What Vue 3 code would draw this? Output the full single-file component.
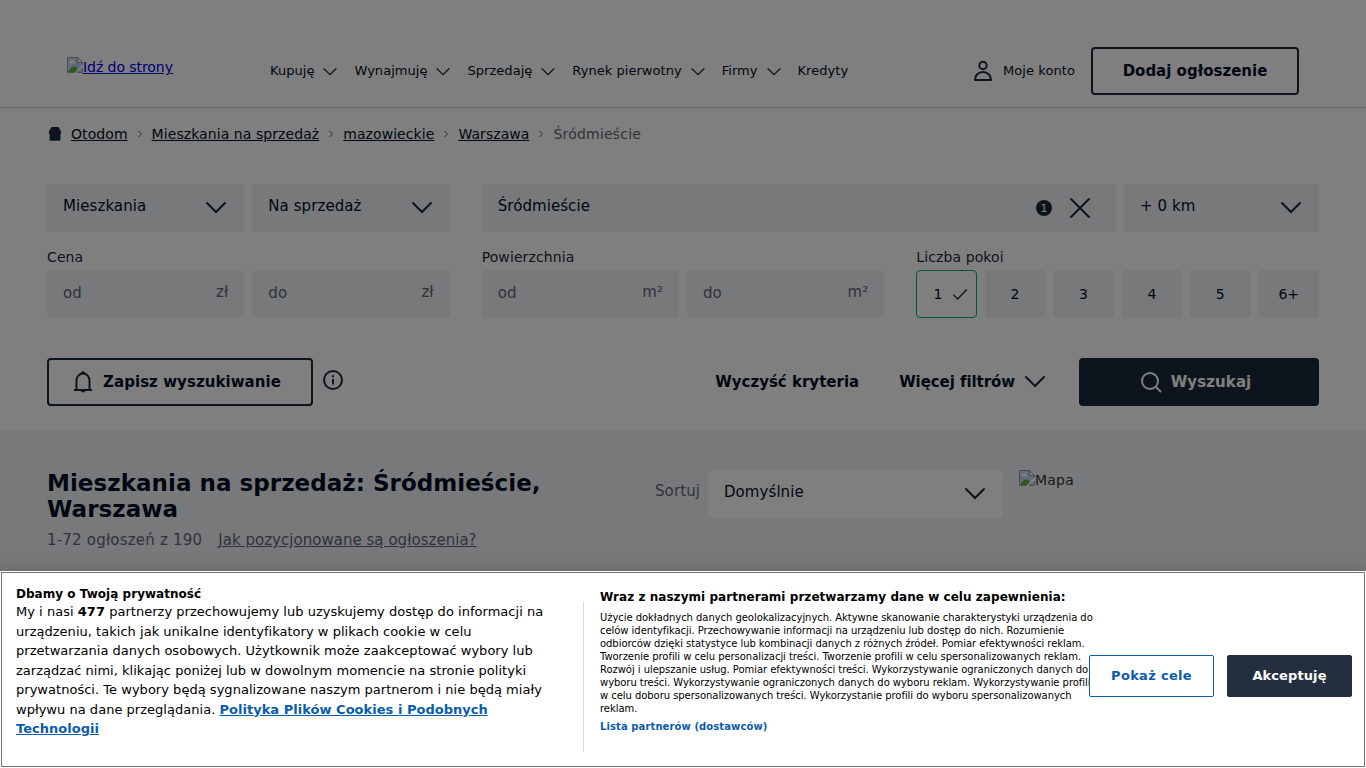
<script setup>
import { h } from 'vue'

const nav = ['Kupuję', 'Wynajmuję', 'Sprzedaję', 'Rynek pierwotny', 'Firmy']
const crumbs = ['Otodom', 'Mieszkania na sprzedaż', 'mazowieckie', 'Warszawa']
const rooms = ['2', '3', '4', '5', '6+']

const Chevron = (props) =>
  h('svg', { width: props.size, height: props.size, viewBox: '0 0 24 24', fill: 'none', stroke: '#1d293b', 'stroke-width': 2, 'stroke-linecap': 'round', 'stroke-linejoin': 'miter' }, [
    h('path', { d: 'M3 7l9 9 9-9' }),
  ])
Chevron.props = ['size']

const MissingImage = () =>
  h('svg', { width: 16, height: 16, viewBox: '0 0 16 16' }, [
    h('path', { d: 'M.5.5h10l5 5v10H.5z', fill: '#c3d6f6' }),
    h('path', { d: 'M2.500 5.500a1.500 1.500 0 0 1 1.600-1.700 2 2 0 0 1 3.500.6 1.200 1.200 0 0 1 .2 2H3.200z', fill: '#fff' }),
    h('path', { d: 'M1 15c2-4 4.500-6 7-5.500 2 .4 3 2.500 4 5.500z', fill: '#5bb23a' }),
    h('path', { d: 'M16 7v3l-7 6H7z', fill: '#fff' }),
    h('path', { d: 'M10.500.500v5h5zM.5.5h10l5 5v2M.5.5v15h7M15.500 11v4.500H10', fill: 'none', stroke: '#9a9a9a' }),
    h('path', { d: 'M11 1.500V5h3.500z', fill: '#fff' }),
  ])
</script>

<template>
  <div class="page">
    <header class="header">
      <a class="logo" href="#"><MissingImage class="missing" /><span>Idź do strony</span></a>
      <nav class="nav">
        <span v-for="item in nav" :key="item" class="nav-item">{{ item }}<Chevron :size="16" /></span>
        <span class="nav-item">Kredyty</span>
      </nav>
      <div class="account">
        <svg width="24" height="24" viewBox="0 0 24 24" fill="none" stroke="#1d293b" stroke-width="2" stroke-linejoin="round">
          <circle cx="12" cy="6.500" r="3.700" />
          <path d="M4 21c0-4.500 3.200-8 8-8s8 3.500 8 8z" />
        </svg>
        <span>Moje konto</span>
      </div>
      <button class="btn outline add">Dodaj ogłoszenie</button>
    </header>

    <main class="search">
      <div class="crumbs">
        <svg class="home" width="16" height="16" viewBox="0 0 16 16"><path fill="#1d293b" d="M4.500 1h7l2.600 4.500v2.300H13.400v6.200q0 .8-.8.8H3.400q-.8 0-.8-.8V7.800H1.900V5.500z" /></svg>
        <template v-for="c in crumbs" :key="c">
          <a href="#">{{ c }}</a>
          <svg class="sep" width="8" height="8" viewBox="0 0 8 8" fill="none" stroke="#5f6673"><path d="M2.500 1l3 3-3 3" /></svg>
        </template>
        <span class="current">Śródmieście</span>
      </div>

      <div class="grid">
        <div class="pair">
          <div class="field"><span>Mieszkania</span><Chevron :size="24" /></div>
          <div class="field"><span>Na sprzedaż</span><Chevron :size="24" /></div>
        </div>
        <div class="location">
          <div class="field place">
            <span>Śródmieście</span>
            <b class="count">1</b>
            <svg width="24" height="24" viewBox="0 0 24 24" fill="none" stroke="#1d293b" stroke-width="2" stroke-linecap="round"><path d="M3 3l18 18M21 3L3 21" /></svg>
          </div>
          <div class="field radius"><span>+ 0 km</span><Chevron :size="24" /></div>
        </div>
        <section>
          <label>Cena</label>
          <div class="pair">
            <div class="field input"><span>od</span><i>zł</i></div>
            <div class="field input"><span>do</span><i>zł</i></div>
          </div>
        </section>
        <section>
          <label>Powierzchnia</label>
          <div class="pair">
            <div class="field input"><span>od</span><i>m²</i></div>
            <div class="field input"><span>do</span><i>m²</i></div>
          </div>
        </section>
        <section>
          <label>Liczba pokoi</label>
          <div class="rooms">
            <div class="room selected">
              <span>1</span>
              <svg width="16" height="16" viewBox="0 0 16 16" fill="none" stroke="#1d293b" stroke-width="1.300" stroke-linecap="round"><path d="M1.700 9l4 4 8.800-9.300" /></svg>
            </div>
            <div v-for="r in rooms" :key="r" class="room">{{ r }}</div>
          </div>
        </section>
      </div>

      <div class="actions">
        <button class="btn outline save">
          <svg width="24" height="24" viewBox="0 0 24 24" fill="none" stroke="#1d293b" stroke-width="2">
            <path d="M3 20h18M5.500 20v-9.500c0-3.800 2.700-7 6.500-7s6.500 3.200 6.500 7V20" />
            <path d="M10.300 3.200a1.700 1.400 0 0 1 3.400 0zM10.300 21.200a1.700 .7 0 0 0 3.400 0z" fill="#1d293b" stroke-width="1" />
          </svg>
          Zapisz wyszukiwanie
        </button>
        <svg class="info" width="24" height="24" viewBox="0 0 24 24" fill="none" stroke="#1d293b" stroke-width="2"><circle cx="12" cy="12" r="9" /><path d="M12 11v5.500M12 7.300v2" /></svg>
        <span class="clear">Wyczyść kryteria</span>
        <span class="more">Więcej filtrów<Chevron :size="24" /></span>
        <button class="btn submit">
          <svg width="24" height="24" viewBox="0 0 24 24" fill="none" stroke="#fff" stroke-width="2" stroke-linecap="round"><circle cx="11" cy="11" r="8" /><path d="M17 17l4.500 4.500" /></svg>
          Wyszukaj
        </button>
      </div>
    </main>

    <div class="results">
      <div class="heading">
        <h1>Mieszkania na sprzedaż: Śródmieście, Warszawa</h1>
        <p><span>1-72 ogłoszeń z 190</span><a href="#">Jak pozycjonowane są ogłoszenia?</a></p>
      </div>
      <span class="sort">Sortuj</span>
      <div class="field order"><span>Domyślnie</span><Chevron :size="24" /></div>
      <div class="map"><MissingImage class="missing" /><span>Mapa</span></div>
    </div>

    <div class="overlay"></div>

    <aside class="consent">
      <div class="policy">
        <h2>Dbamy o Twoją prywatność</h2>
        <p>My i nasi <b>477</b> partnerzy przechowujemy lub uzyskujemy dostęp do informacji na urządzeniu, takich jak unikalne identyfikatory w plikach cookie w celu przetwarzania danych osobowych. Użytkownik może zaakceptować wybory lub zarządzać nimi, klikając poniżej lub w dowolnym momencie na stronie polityki prywatności. Te wybory będą sygnalizowane naszym partnerom i nie będą miały wpływu na dane przeglądania. <a href="#">Polityka Plików Cookies i Podobnych Technologii</a></p>
      </div>
      <div class="partners">
        <h3>Wraz z naszymi partnerami przetwarzamy dane w celu zapewnienia:</h3>
        <p>Użycie dokładnych danych geolokalizacyjnych. Aktywne skanowanie charakterystyki urządzenia do celów identyfikacji. Przechowywanie informacji na urządzeniu lub dostęp do nich. Rozumienie odbiorców dzięki statystyce lub kombinacji danych z różnych źródeł. Pomiar efektywności reklam. Tworzenie profili w celu personalizacji treści. Tworzenie profili w celu spersonalizowanych reklam. Rozwój i ulepszanie usług. Pomiar efektywności treści. Wykorzystywanie ograniczonych danych do wyboru treści. Wykorzystywanie ograniczonych danych do wyboru reklam. Wykorzystywanie profili w celu doboru spersonalizowanych treści. Wykorzystanie profili do wyboru spersonalizowanych reklam.</p>
        <a href="#">Lista partnerów (dostawców)</a>
      </div>
      <div class="choices">
        <button class="goals">Pokaż cele</button>
        <button class="accept">Akceptuję</button>
      </div>
    </aside>
  </div>
</template>

<style>
body { overflow: hidden; background: #fff; }
</style>

<style scoped>
* { box-sizing: border-box; }
.page { position: relative; height: 768px; overflow: hidden; background: #fff; color: #000f24; font-family: "DejaVu Sans", sans-serif; font-size: 14px; }
svg { display: block; flex: none; }
h1, h2, h3, p { margin: 0; }
button { font-family: inherit; padding: 0; }
.header { display: flex; height: 108px; padding: 0 67px; border-bottom: 1px solid #d2d4d8; }
.logo { display: flex; width: 203px; padding-top: 57px; font-size: 14px; line-height: 20px; letter-spacing: -.06px; color: #0000ee; }
.logo span { height: 20px; text-decoration: underline; }
.nav { display: flex; gap: 16px; padding-top: 60px; letter-spacing: .04px; }
.nav-item { display: flex; gap: 8px; align-items: center; height: 20px; font-size: 13px; white-space: nowrap; }
.nav-item svg { margin-top: 3px; }
.account { display: flex; gap: 8px; align-items: center; height: 24px; margin: 59px 16px 0 auto; font-size: 13px; letter-spacing: .08px; }
.account span { margin-top: -2px; }
.btn { display: flex; align-items: center; justify-content: center; gap: 8px; height: 48px; border-radius: 4px; font-size: 15px; font-weight: 700; color: #000f24; background: transparent; border: 2px solid #1d293b; }
.add { width: 208px; margin-top: 47px; }
.search { height: 322px; padding: 16px 47px 0; }
.crumbs { display: flex; align-items: center; gap: 8px; height: 20px; font-size: 14px; letter-spacing: .07px; }
.crumbs a { color: #000f24; text-decoration: underline; }
.crumbs .current { color: #5f6673; letter-spacing: .2px; }
.grid { display: grid; grid-template-columns: repeat(3, 1fr); column-gap: 32px; margin-top: 40px; }
.pair { display: grid; grid-template-columns: 1fr 1fr; gap: 8px; }
.location { grid-column: span 2; display: flex; gap: 8px; }
.field { display: flex; align-items: center; justify-content: space-between; height: 48px; padding: 0 16px; border-radius: 4px; background: #f1f3f6; font-size: 15px; letter-spacing: .07px; }
.field > span { margin-top: -4px; }
.place { flex: 1; padding-right: 24px; }
.place > span { flex: 1; }
.count { display: grid; place-items: center; width: 16px; height: 16px; margin-right: 16px; border-radius: 50%; background: #1d293b; color: #fff; font-size: 11px; font-weight: 400; letter-spacing: 0; }
.radius { width: 195px; }
section { padding-top: 15px; }
label { display: block; height: 23px; line-height: 20px; font-size: 14px; letter-spacing: .1px; color: #1d293b; }
.input { color: #5f6673; }
.input > span { margin-top: -2px; }
.input i { font-style: normal; margin-top: -4px; }
.rooms { display: grid; grid-template-columns: repeat(6, 1fr); gap: 8px; }
.room { display: flex; align-items: center; justify-content: center; height: 48px; border-radius: 4px; background: #f1f3f6; font-size: 14px; }
.selected { gap: 9px; padding-left: 8px; background: #fff; border: 1px solid #00b36b; }
.actions { display: flex; align-items: center; margin-top: 40px; font-size: 15px; font-weight: 700; }
.save { width: 266px; padding-right: 8px; letter-spacing: .06px; }
.info { margin: -4px 0 0 8px; }
.clear { margin-left: auto; }
.more { display: flex; align-items: center; gap: 8px; margin: 0 32px 0 40px; letter-spacing: -.07px; }
.submit { width: 240px; padding-right: 8px; background: #1d293b; color: #fff; letter-spacing: .1px; }
.results { display: flex; height: 338px; padding: 40px 47px 0; background: #f1f3f6; }
.heading { width: 600px; }
h1 { width: 520px; font-size: 23px; line-height: 26px; letter-spacing: .04px; }
.heading p { display: flex; gap: 16px; margin-top: 8px; line-height: 20px; font-size: 15px; color: #5f6673; }
.heading p span { letter-spacing: .2px; }
.heading a { color: #5f6673; text-decoration: underline; letter-spacing: .03px; }
.sort { width: 61px; padding-left: 8px; line-height: 42px; font-size: 15px; letter-spacing: .1px; color: #5f6673; }
.order { width: 295px; background: #fff; }
.map { display: flex; margin-left: 16px; height: 20px; line-height: 20px; letter-spacing: .2px; color: #333; }
.overlay { position: absolute; inset: 0; background: rgba(0, 0, 0, .5); }
.consent { position: absolute; left: 0; right: 0; bottom: 0; height: 197px; display: flex; padding: 0 14px 0 16px; background: #fff; box-shadow: 0 0 18px rgba(0, 0, 0, .2); outline: 1px solid #717376; outline-offset: -2px; color: #000; }
.policy { flex: none; width: 567px; padding: 16px 32px 0 0; }
h2 { font-size: 12px; line-height: 14px; letter-spacing: .03px; }
.policy p { margin-top: 1px; font-size: 13px; line-height: 19.500px; letter-spacing: .025px; }
.consent a { color: #0b5cab; font-weight: 700; }
.partners { flex: none; width: 506px; height: 150px; margin-top: 31px; padding-left: 16px; border-left: 1px solid #d8d8d8; }
h3 { margin-top: -14px; font-size: 12px; line-height: 18px; letter-spacing: .045px; white-space: nowrap; }
.partners p { width: 496px; margin: 5px 0; font-size: 10px; line-height: 13px; letter-spacing: -.05px; }
.partners a { display: block; font-size: 10px; line-height: 13px; letter-spacing: .1px; text-decoration: none; }
.choices { display: flex; gap: 13px; margin: 84px 0 0 auto; position: relative; }
.choices button { width: 125px; height: 42px; padding-bottom: 2px; border-radius: 2px; border: 1px solid #0b5cab; background: #fff; color: #0b5cab; font-size: 13px; font-weight: 700; letter-spacing: .3px; }
.choices .accept { background: #232f3e; border-color: #232f3e; color: #fff; letter-spacing: .1px; }
</style>
